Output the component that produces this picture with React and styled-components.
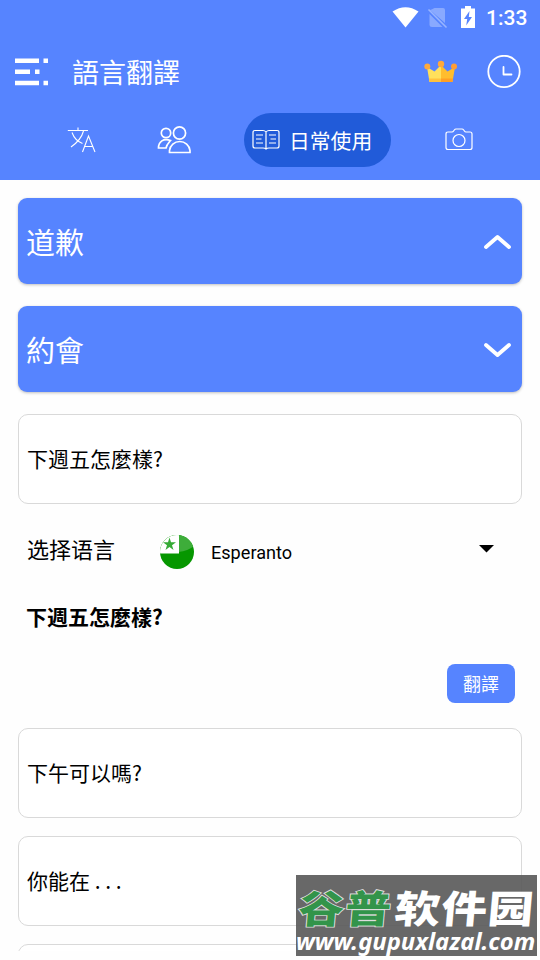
import { useState } from "react";
import styled, { createGlobalStyle } from "styled-components";

const GlobalStyle = createGlobalStyle`
  * {
    box-sizing: border-box;
  }

  body {
    margin: 0;
    background-color: #fefefe;
    font-family: Roboto, "Noto Sans CJK SC", sans-serif;
    overflow: hidden;
  }

  svg {
    display: block;
    flex-shrink: 0;
  }
`;

const Screen = styled.div`
  position: relative;
  width: 540px;
  height: 960px;
  overflow: hidden;
`;

const Header = styled.header`
  height: 180px;
  background-color: #5684ff;
  color: #fff;
`;

const StatusBar = styled.div`
  display: flex;
  align-items: center;
  justify-content: flex-end;
  height: 36px;
  padding-right: 12px;
`;

const Clock = styled.span`
  width: 42px;
  margin-left: 8px;
  font-size: 21px;
  font-weight: 500;
  line-height: 38px;
  white-space: nowrap;
`;

const Toolbar = styled.div`
  display: flex;
  align-items: center;
  height: 72px;
  padding: 0 19px 0 15px;
`;

const Title = styled.h1`
  flex: 1;
  margin: 0 0 0 23px;
  font-family: "Noto Sans CJK SC", sans-serif;
  font-size: 27px;
  font-weight: 400;
  line-height: 40px;
`;

const Tabs = styled.nav`
  display: flex;
  align-items: center;
  height: 64px;
  padding-left: 67px;
`;

const Tab = styled.button`
  display: flex;
  align-items: center;
  width: ${(props) => props.$width}px;
  height: 54px;
  margin: 0 ${(props) => props.$gap || 0}px 0 0;
  padding: 0 0 0 ${(props) => (props.$active ? 8 : 0)}px;
  border: 0;
  border-radius: 27px;
  background-color: ${(props) => (props.$active ? "#215bd9" : "transparent")};
  color: #fff;
  font-family: "Noto Sans CJK SC", sans-serif;
  font-size: 20.8px;
  white-space: nowrap;

  span {
    margin-left: 9px;
  }
`;

const List = styled.main`
  display: flex;
  flex-direction: column;
  height: 771px;
  padding: 18px 18px 0;
  overflow: hidden;
`;

const Category = styled.button`
  display: flex;
  flex-shrink: 0;
  align-items: center;
  justify-content: space-between;
  height: 86px;
  margin: 0 0 22px;
  padding: 0 10px 0 8px;
  border: 0;
  border-radius: 9px;
  background-color: #5684ff;
  box-shadow: 0 1px 3px rgba(0, 0, 0, 0.25);
  color: #fff;
  font-family: "Noto Sans CJK SC", sans-serif;
  font-size: 29px;

  svg {
    margin-top: 2px;
  }
`;

const Phrase = styled.div`
  flex-shrink: 0;
  height: 90px;
  margin-bottom: ${(props) => (props.$open ? 0 : 18)}px;
  padding-left: 8px;
  border: 1px solid #d9d9d9;
  border-radius: 10px;
  background-color: #fff;
  color: #000;
  font-family: "Noto Sans CJK SC", sans-serif;
  font-size: 21px;
  line-height: 86px;
`;

const Detail = styled.section`
  display: flex;
  flex-shrink: 0;
  flex-direction: column;
  height: 224px;
  color: #000;
`;

const LanguageRow = styled.div`
  display: flex;
  align-items: center;
  height: 96px;
  padding: 0 28px 0 9px;
`;

const Label = styled.span`
  width: 133px;
  margin-top: -8px;
  font-family: "Noto Sans CJK SC", sans-serif;
  font-size: 22px;
`;

const Language = styled.span`
  flex: 1;
  margin-left: 17px;
  font-size: 18.1px;
`;

const Translation = styled.strong`
  padding-left: 8px;
  font-family: "Noto Sans CJK SC", sans-serif;
  font-size: 21px;
  font-weight: 700;
  line-height: 32px;
`;

const TranslateButton = styled.button`
  align-self: flex-end;
  width: 68px;
  height: 39px;
  margin: 32px 7px 0 0;
  padding: 0 0 2px;
  border: 0;
  border-radius: 8px;
  background-color: #5684ff;
  color: #fff;
  font-family: "Noto Sans CJK SC", sans-serif;
  font-size: 18px;
`;

const Watermark = styled.div`
  position: absolute;
  left: 296px;
  top: 875px;
  width: 241px;
  height: 81px;
  overflow: hidden;
  background-color: rgba(91, 91, 91, 0.92);
  color: #fff;
`;

const SiteName = styled.div`
  display: flex;
  height: 53px;
  padding-left: 3px;
  font-family: "Noto Sans CJK SC", sans-serif;
  font-size: 43px;
  font-weight: 900;
  line-height: 62px;
  white-space: nowrap;
`;

const Glyphs = styled.span`
  width: ${(props) => props.$width}px;
  height: 62px;
  color: ${(props) => props.$color};
  letter-spacing: ${(props) => props.$spacing}px;
  -webkit-text-stroke: ${(props) => (props.$outlined ? "2px #ddd" : "0")};
  paint-order: stroke fill;
  transform: skewX(-5deg) scale(1.06, 0.89);
  transform-origin: left center;
`;

const SiteUrl = styled.div`
  font-family: "Noto Sans", sans-serif;
  font-size: 23.8px;
  font-style: italic;
  font-weight: 700;
  line-height: 26px;
  white-space: nowrap;
`;

function StatusIcons() {
  return (
    <svg width="86" height="36" viewBox="392 0 86 36" fill="#fff">
      <path d="M392.5 11.5Q405.5 3 418.500 11.500L405.500 27.500Z" />
      <path
        d="M431.500 9.500 434.500 8H443Q445 8 445 10V23L430 10ZM429.500 14 442.500 27H432Q429.500 27 429.500 25Z"
        opacity=".3"
      />
      <path d="M428.500 9.500 446.500 27.500" stroke="#fff" strokeWidth="1.600" opacity=".4" />
      <path d="M465 6H471V8.500H475V28H461V8.500H465Z" />
      <path d="M469.500 11 464 19H467.200L466.200 25.500 472 17H468.800Z" fill="#5684ff" />
    </svg>
  );
}

function MenuIcon() {
  return (
    <svg width="34" height="28" viewBox="0 0 34 28" fill="#fff">
      <path d="M0 .5h24v4.500H0zM28.500.5h4.500v4.500h-4.500zM0 11.500h15v4.500H0zM20 11.500h4.500v4.500H20zM0 22.700h24v4.500H0zM28.500 22.700h4.500v4.500h-4.500z" />
    </svg>
  );
}

function CrownIcon() {
  return (
    <svg width="34" height="24" viewBox="0 0 34 24">
      <path d="M3 7 10.500 11.500 17 5V22H5.500Z" fill="#ffe05c" />
      <path d="M17 5 23.500 11.500 31 7 28.500 22H17Z" fill="#ffbd2e" />
      <path d="M5 18.500H17V22H5.500Z" fill="#ffc13d" />
      <path d="M17 18.500H29L28.500 22H17Z" fill="#ff9f24" />
      <circle cx="3.300" cy="6.500" r="3" fill="#ffa93a" />
      <circle cx="17" cy="4" r="3.200" fill="#ffa93a" />
      <circle cx="30" cy="6.500" r="3" fill="#ff9d35" />
    </svg>
  );
}

function HistoryIcon() {
  return (
    <svg width="34" height="34" viewBox="0 0 34 34" fill="none" stroke="#fff" style={{ marginLeft: 29 }}>
      <circle cx="17" cy="16.500" r="15.700" strokeWidth="1.800" />
      <path d="M16.500 12V19.500H24.500" strokeWidth="1.800" strokeLinecap="round" strokeLinejoin="round" />
    </svg>
  );
}

function TranslateIcon() {
  return (
    <svg width="29" height="28" viewBox="0 0 29 28" fill="none" stroke="#fff" strokeWidth="1.100">
      <path d="M.8 4.500H21M11 1.500V4.500M5 6.500C7 12 11.500 16 15.500 17.500M16.500 5C14.500 12.500 9 17.500 4 21M15.500 26 21.500 10 28 26M17.500 20.500H25.500" />
    </svg>
  );
}

function PeopleIcon() {
  return (
    <svg width="34" height="28" viewBox="0 0 34 28" fill="none" stroke="#fff" strokeWidth="1.700">
      <circle cx="22.500" cy="7" r="6.100" />
      <circle cx="9" cy="7" r="4.700" />
      <path d="M12.500 26.500V24.500A10.300 10 0 0 1 33 24.500V26.500ZM13.500 14.500C6.500 12 1.500 15.500 1.500 22H9C9.500 18.800 11 17.500 13.500 14.500Z" />
    </svg>
  );
}

function BookIcon() {
  return (
    <svg width="28" height="22" viewBox="0 0 28 22" fill="none" stroke="#fff" strokeWidth="1.200">
      <path d="M14 3Q12.800 1.500 11 1.500H3Q1 1.500 1 3.500V17Q1 19 3 19H11Q13 19 14 20Q15 19 17 19H25Q27 19 27 17V3.500Q27 1.500 25 1.500H17Q15.200 1.500 14 3ZM14 3V20M4 6H11M4 10H9.500M4 14H11M17 6H24M18.500 10H24M17 14H24" />
    </svg>
  );
}

function CameraIcon() {
  return (
    <svg width="28" height="25" viewBox="0 0 28 25" fill="none" stroke="#fff" strokeWidth="1.200">
      <path d="M3 4H7Q8 4 8.600 3L9.300 2Q10 1 11 1H17Q18 1 18.700 2L19.400 3Q20 4 21 4H25Q27 4 27 6V19.500Q27 21.500 25 21.500H3Q1 21.500 1 19.500V6Q1 4 3 4Z" />
      <circle cx="14" cy="12.500" r="6" />
    </svg>
  );
}

function Chevron({ open }) {
  return (
    <svg width="29" height="18" viewBox="0 0 29 18" fill="none" stroke="#fff" strokeWidth="3.800" strokeLinecap="round" strokeLinejoin="round">
      <path d={open ? "M3 14 14.500 4 26 14" : "M3 4 14.500 14 26 4"} />
    </svg>
  );
}

function EsperantoFlag() {
  return (
    <svg width="34" height="36" viewBox="0 0 34 36">
      <clipPath id="flag">
        <circle cx="17" cy="18" r="17" />
      </clipPath>
      <g clipPath="url(#flag)">
        <path d="M0 0H34V36H0Z" fill="#069700" />
        <path d="M0 0H34V12Q28 17 18.500 18H0Z" fill="#3ead3a" />
        <path d="M0 0H19V19.500H0Z" fill="#fff" />
        <path d="M9.500 3.500 11 8.200H16L12 11.200 13.500 16 9.500 13 5.500 16 7 11.200 3 8.200H8Z" fill="#35aa35" />
      </g>
    </svg>
  );
}

function App() {
  const [active, setActive] = useState("daily");

  return (
    <Screen>
      <GlobalStyle />
      <Header>
        <StatusBar>
          <StatusIcons />
          <Clock>1:33</Clock>
        </StatusBar>
        <Toolbar>
          <MenuIcon />
          <Title>語言翻譯</Title>
          <CrownIcon />
          <HistoryIcon />
        </Toolbar>
        <Tabs>
          <Tab $width={29} $gap={61} onClick={() => setActive("text")}>
            <TranslateIcon />
          </Tab>
          <Tab $width={34} $gap={53} onClick={() => setActive("talk")}>
            <PeopleIcon />
          </Tab>
          <Tab $width={147} $gap={54} $active={active === "daily"} onClick={() => setActive("daily")}>
            <BookIcon />
            <span>日常使用</span>
          </Tab>
          <Tab $width={28} onClick={() => setActive("camera")}>
            <CameraIcon />
          </Tab>
        </Tabs>
      </Header>
      <List>
        <Category>
          道歉
          <Chevron open />
        </Category>
        <Category>
          約會
          <Chevron />
        </Category>
        <Phrase $open>下週五怎麼樣?</Phrase>
        <Detail>
          <LanguageRow>
            <Label>选择语言</Label>
            <EsperantoFlag />
            <Language>Esperanto</Language>
            <svg width="15" height="16" viewBox="0 0 15 16">
              <path d="M0 1H15L7.500 8.500Z" />
            </svg>
          </LanguageRow>
          <Translation>下週五怎麼樣?</Translation>
          <TranslateButton>翻譯</TranslateButton>
        </Detail>
        <Phrase>下午可以嗎?</Phrase>
        <Phrase>你能在 . . .</Phrase>
        <Phrase />
      </List>
      <Watermark>
        <SiteName>
          <Glyphs $width={96} $color="#32944a" $spacing={1} $outlined>
            谷普
          </Glyphs>
          <Glyphs $width={140} $color="#fff" $spacing={1}>
            软件园
          </Glyphs>
        </SiteName>
        <SiteUrl>www.gupuxlazal.com</SiteUrl>
      </Watermark>
    </Screen>
  );
}

export default App;
